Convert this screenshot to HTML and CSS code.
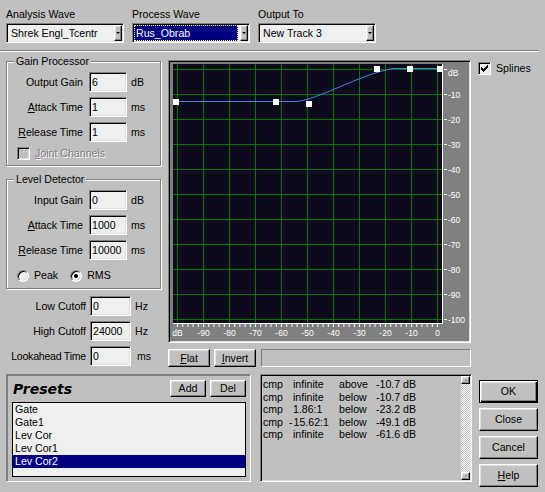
FILE: index.html
```html
<!DOCTYPE html>
<html lang="en">
<head>
    <meta charset="UTF-8">
    <meta name="viewport" content="width=device-width, initial-scale=1.0">
    <title>Dynamics Processing</title>
    <link rel="stylesheet" href="styles.css">
</head>
<body>
    <div class="dialog">
        <div class="wave-row">
            <div class="wave-field">
                <div class="wave-label">Analysis Wave</div>
                <div class="combo">
                    <span class="combo-text">Shrek Engl_Tcentr</span>
                    <span class="combo-btn"></span>
                </div>
            </div>
            <div class="wave-field">
                <div class="wave-label">Process Wave</div>
                <div class="combo">
                    <span class="combo-text selected">Rus_Obrab</span>
                    <span class="combo-btn"></span>
                </div>
            </div>
            <div class="wave-field">
                <div class="wave-label">Output To</div>
                <div class="combo">
                    <span class="combo-text">New Track 3</span>
                    <span class="combo-btn"></span>
                </div>
            </div>
        </div>

        <div class="separator"></div>

        <div class="main">
            <div class="left-col">
                <div class="group gain-group">
                    <div class="group-title">Gain Processor</div>
                    <div class="row">
                        <label class="lbl">Output Gain</label>
                        <input class="edit" type="text" value="6">
                        <span class="unit">dB</span>
                    </div>
                    <div class="row">
                        <label class="lbl"><u>A</u>ttack Time</label>
                        <input class="edit" type="text" value="1">
                        <span class="unit">ms</span>
                    </div>
                    <div class="row">
                        <label class="lbl"><u>R</u>elease Time</label>
                        <input class="edit" type="text" value="1">
                        <span class="unit">ms</span>
                    </div>
                    <div class="check-row disabled">
                        <span class="checkbox"></span>
                        <span class="check-label"><u>J</u>oint Channels</span>
                    </div>
                </div>

                <div class="group level-group">
                    <div class="group-title">Level Detector</div>
                    <div class="row">
                        <label class="lbl">Input Gain</label>
                        <input class="edit" type="text" value="0">
                        <span class="unit">dB</span>
                    </div>
                    <div class="row">
                        <label class="lbl"><u>A</u>ttack Time</label>
                        <input class="edit" type="text" value="1000">
                        <span class="unit">ms</span>
                    </div>
                    <div class="row">
                        <label class="lbl"><u>R</u>elease Time</label>
                        <input class="edit" type="text" value="10000">
                        <span class="unit">ms</span>
                    </div>
                    <div class="radio-row">
                        <span class="radio"></span>
                        <span class="radio-label peak">Peak</span>
                        <span class="radio checked"></span>
                        <span class="radio-label">RMS</span>
                    </div>
                </div>

                <div class="cutoffs">
                    <div class="row">
                        <label class="lbl wide">Low Cutoff</label>
                        <input class="edit wide" type="text" value="0">
                        <span class="unit">Hz</span>
                    </div>
                    <div class="row">
                        <label class="lbl wide">High Cutoff</label>
                        <input class="edit wide" type="text" value="24000">
                        <span class="unit">Hz</span>
                    </div>
                    <div class="row">
                        <label class="lbl wide narrow">Lookahead Time</label>
                        <input class="edit wide" type="text" value="0">
                        <span class="unit ms">ms</span>
                    </div>
                </div>
            </div>

            <div class="graph-col">
                <div class="graph">
                    <svg width="299" height="279" viewBox="0 0 299 279">
                        <rect x="3" y="2" width="269" height="259" fill="#0b0b1c"/>
                        <!-- grid, 10 dB per line -->
                        <path fill="#007800"
                              d="M7 2h1v259h-1z M33 2h1v259h-1z M59 2h1v259h-1z M85 2h1v259h-1z M111 2h1v259h-1z M137 2h1v259h-1z
                                 M163 2h1v259h-1z M189 2h1v259h-1z M215 2h1v259h-1z M241 2h1v259h-1z M267 2h1v259h-1z
                                 M3 7h269v1h-269z M3 32h269v1h-269z M3 57h269v1h-269z M3 82h269v1h-269z M3 107h269v1h-269z M3 132h269v1h-269z
                                 M3 157h269v1h-269z M3 182h269v1h-269z M3 207h269v1h-269z M3 232h269v1h-269z M3 257h269v1h-269z"/>
                        <!-- axes and ticks -->
                        <path fill="#fff"
                              d="M272 2h1v260h-1z M3 261h270v1h-270z
                                 M274 7h3v1h-3z M274 32h3v1h-3z M274 57h3v1h-3z M274 82h3v1h-3z M274 107h3v1h-3z M274 132h3v1h-3z
                                 M274 157h3v1h-3z M274 182h3v1h-3z M274 207h3v1h-3z M274 232h3v1h-3z M274 257h3v1h-3z"/>
                        <line x1="7" y1="263.5" x2="269" y2="263.5" stroke="#fff" stroke-width="3" stroke-dasharray="1 4.2"/>
                        <g class="axis-label">
                            <text x="278" y="14">dB</text>
                            <text x="278" y="35.5">-10</text>
                            <text x="278" y="60.5">-20</text>
                            <text x="278" y="85.5">-30</text>
                            <text x="278" y="110.5">-40</text>
                            <text x="278" y="135.5">-50</text>
                            <text x="278" y="160.5">-60</text>
                            <text x="278" y="185.5">-70</text>
                            <text x="278" y="210.5">-80</text>
                            <text x="278" y="235.5">-90</text>
                            <text x="278" y="260.5">-100</text>
                        </g>
                        <g class="axis-label bottom">
                            <text x="7.5" y="274">dB</text>
                            <text x="33.5" y="274">-90</text>
                            <text x="59.5" y="274">-80</text>
                            <text x="85.5" y="274">-70</text>
                            <text x="111.5" y="274">-60</text>
                            <text x="137.5" y="274">-50</text>
                            <text x="163.5" y="274">-40</text>
                            <text x="189.5" y="274">-30</text>
                            <text x="215.5" y="274">-20</text>
                            <text x="241.5" y="274">-10</text>
                            <text x="267.5" y="274">0</text>
                        </g>
                        <!-- transfer curve -->
                        <path d="M6 39.5H126C148 38 188 13 223 6.5H270" stroke="#4a80f0" stroke-width="1" fill="none"/>
                        <g fill="#fff">
                            <rect x="3" y="37" width="6" height="6"/>
                            <rect x="103" y="37" width="6" height="6"/>
                            <rect x="136" y="39" width="6" height="6"/>
                            <rect x="204" y="4" width="6" height="6"/>
                            <rect x="237" y="4" width="6" height="6"/>
                            <rect x="267" y="4" width="6" height="6"/>
                        </g>
                    </svg>
                </div>
                <div class="graph-tools">
                    <button class="btn tool-btn"><u>F</u>lat</button>
                    <button class="btn tool-btn"><u>I</u>nvert</button>
                    <div class="status-panel"></div>
                </div>
            </div>

            <div class="right-col">
                <div class="check-row">
                    <span class="checkbox checked">
                        <svg width="7" height="7" viewBox="0 0 7 7"><path d="M0 2H1V3H2V4H3V3H4V2H5V1H6V0H7V3H6V4H5V5H4V6H3V7H2V6H1V5H0Z" fill="#000"/></svg>
                    </span>
                    <span class="check-label">Splines</span>
                </div>
            </div>
        </div>

        <div class="bottom">
            <div class="presets">
                <div class="presets-head">
                    <span class="presets-title">Presets</span>
                    <button class="btn small-btn">Add</button>
                    <button class="btn small-btn">Del</button>
                </div>
                <div class="preset-list">
                    <div class="preset-item">Gate</div>
                    <div class="preset-item">Gate1</div>
                    <div class="preset-item">Lev Cor</div>
                    <div class="preset-item">Lev Cor1</div>
                    <div class="preset-item selected">Lev Cor2</div>
                </div>
            </div>

            <div class="info">
                <div class="log">
                    <div class="log-row"><span>cmp</span><span>infinite</span><span>above</span><span>-10.7 dB</span></div>
                    <div class="log-row"><span>cmp</span><span>infinite</span><span>below</span><span>-10.7 dB</span></div>
                    <div class="log-row"><span>cmp</span><span>1.86:1</span><span>below</span><span>-23.2 dB</span></div>
                    <div class="log-row"><span>cmp</span><span><span class="dash">-</span>15.62:1</span><span>below</span><span>-49.1 dB</span></div>
                    <div class="log-row"><span>cmp</span><span>infinite</span><span>below</span><span>-61.6 dB</span></div>
                </div>
                <div class="scrollbar">
                    <span class="scroll-btn up"></span>
                    <span class="scroll-track"></span>
                    <span class="scroll-btn down"></span>
                </div>
            </div>

            <div class="actions">
                <button class="btn action-btn default">OK</button>
                <button class="btn action-btn">Close</button>
                <button class="btn action-btn">Cancel</button>
                <button class="btn action-btn"><u>H</u>elp</button>
            </div>
        </div>
    </div>
</body>
</html>
```

FILE: styles.css
```css
body {
    margin: 0;
    width: 545px;
    height: 492px;
    overflow: hidden;
    background-color: #c0c0c0;
    font-family: "Liberation Sans", Arial, sans-serif;
    font-size: 10.6px;
    line-height: 13px;
    color: #000;
}

u {
    text-underline-offset: 1px;
}

/* shared 3d edges */
.combo,
.edit,
.checkbox,
.graph,
.info {
    box-sizing: border-box;
    border: 1px solid;
    border-color: #808080 #fff #fff #808080;
    box-shadow: inset 1px 1px #000, inset -1px -1px #dfdfdf;
}

.btn,
.combo-btn,
.scroll-btn {
    box-sizing: border-box;
    border: 1px solid;
    border-color: #fff #000 #000 #fff;
    box-shadow: inset -1px -1px #808080, inset 1px 1px #dfdfdf;
    background-color: #c0c0c0;
}

.btn {
    padding: 0;
    font: inherit;
    color: #000;
    text-align: center;
}

/* top row */
.wave-row {
    display: flex;
    gap: 8px;
    padding: 8px 0 0 6px;
}

.wave-label {
    margin-bottom: 2px;
}

.combo {
    display: flex;
    width: 118px;
    height: 20px;
    padding: 1px;
    background-color: #efefef;
}

.combo-text {
    flex: 1;
    padding-left: 3px;
    line-height: 16px;
    white-space: nowrap;
    overflow: hidden;
}

.combo-text.selected {
    margin-right: 2px;
    padding-left: 2px;
    background-color: #000080;
    color: #fff;
    outline: 1px dotted #ffff80;
    outline-offset: -1px;
}

.combo-btn {
    display: flex;
    align-items: center;
    justify-content: center;
    width: 8px;
}

.combo-btn::after {
    content: "";
    border-left: 2px solid transparent;
    border-right: 2px solid transparent;
    border-top: 2px solid #000;
}

.separator {
    width: 538px;
    margin-top: 7px;
    border-top: 1px solid #808080;
    border-bottom: 1px solid #fff;
}

/* middle */
.main {
    display: flex;
    padding-left: 6px;
}

.left-col {
    width: 155px;
    margin-top: 9px;
}

.group {
    border: 1px solid #808080;
    box-shadow: inset 1px 1px #fff, 1px 1px #fff;
}

.gain-group {
    padding-bottom: 5px;
}

.level-group {
    margin-top: 13px;
    padding-bottom: 6px;
}

.group-title {
    width: fit-content;
    margin: -7px 0 4px 7px;
    padding: 0 2px;
    background-color: #c0c0c0;
}

.row {
    display: flex;
    align-items: center;
    height: 20px;
}

.row + .row {
    margin-top: 5px;
}

.lbl {
    width: 76px;
    margin-right: 6px;
    text-align: right;
    white-space: nowrap;
}

.lbl.wide {
    width: 80px;
    margin-right: 4px;
}

.lbl.narrow {
    letter-spacing: -0.25px;
}

.edit {
    width: 38px;
    height: 20px;
    margin: 0;
    padding: 0 0 0 2px;
    background-color: #efefef;
    font: inherit;
    color: #000;
    outline: none;
}

.edit.wide {
    width: 41px;
}

.unit {
    margin-left: 4px;
}

.unit.ms {
    margin-left: 6px;
}

.check-row {
    display: flex;
    align-items: center;
    height: 13px;
}

.gain-group .check-row {
    margin-top: 5px;
    padding-left: 10px;
}

.checkbox {
    display: flex;
    align-items: center;
    justify-content: center;
    width: 13px;
    height: 13px;
    background-color: #efefef;
}

.check-label {
    margin-left: 5px;
}

.disabled .checkbox {
    background-color: #c0c0c0;
}

.disabled .check-label {
    color: #808080;
    text-shadow: 1px 1px #fff;
}

.radio-row {
    display: flex;
    align-items: center;
    height: 13px;
    margin-top: 9px;
    padding-left: 10px;
}

.radio {
    display: flex;
    align-items: center;
    justify-content: center;
    box-sizing: border-box;
    width: 12px;
    height: 12px;
    border: 1px solid;
    border-color: #808080 #fff #fff #808080;
    border-radius: 50%;
    box-shadow: inset 1px 1px #000, inset -1px -1px #dfdfdf;
    background-color: #efefef;
}

.radio.checked::after {
    content: "";
    width: 4px;
    height: 4px;
    border-radius: 50%;
    background-color: #000;
}

.radio-label {
    margin-left: 5px;
}

.radio-label.peak {
    margin-right: 12px;
}

.cutoffs {
    margin-top: 7px;
}

/* graph */
.graph-col {
    width: 303px;
    margin: 8px 0 0 7px;
}

.graph {
    width: 303px;
    height: 283px;
    padding: 1px;
    background-color: #808080;
}

.graph svg {
    display: block;
}

.axis-label {
    fill: #fff;
    font-family: "Liberation Sans", Arial, sans-serif;
    font-size: 8.5px;
}

.axis-label.bottom {
    text-anchor: middle;
}

.graph-tools {
    display: flex;
    gap: 4px;
    margin-top: 6px;
}

.tool-btn {
    width: 42px;
    height: 18px;
}

.status-panel {
    flex: 1;
    height: 18px;
    margin-left: 1px;
    box-sizing: border-box;
    border: 1px solid;
    border-color: #808080 #fff #fff #808080;
}

.right-col {
    margin: 10px 0 0 7px;
}

/* bottom */
.bottom {
    display: flex;
    margin-top: 7px;
    padding-left: 6px;
}

.presets {
    box-sizing: border-box;
    width: 245px;
    height: 108px;
    padding: 5px 4px 0 5px;
    border: 1px solid;
    border-color: #808080 #fff #fff #808080;
    box-shadow: inset 1px 1px #808080;
}

.presets-head {
    display: flex;
    align-items: flex-start;
    height: 18px;
    margin-bottom: 4px;
}

.presets-title {
    flex: 1;
    margin-left: 1px;
    font-family: "DejaVu Sans", sans-serif;
    font-size: 14px;
    font-weight: bold;
    font-style: italic;
    line-height: 18px;
}

.small-btn {
    width: 36px;
    height: 17px;
    margin-left: 4px;
}

.preset-list {
    box-sizing: border-box;
    height: 75px;
    border: 1px solid #000;
    background-color: #efefef;
}

.preset-item {
    padding-left: 2px;
}

.preset-item.selected {
    background-color: #000080;
    color: #fff;
}

.info {
    display: flex;
    width: 212px;
    height: 108px;
    margin-left: 9px;
    padding: 1px;
}

.log {
    flex: 1;
    padding: 2px 0 0 1px;
}

.log-row {
    display: grid;
    grid-template-columns: 30px 46px 37px auto;
    line-height: 12.5px;
    white-space: nowrap;
}

.dash {
    margin-left: -4px;
    margin-right: 1px;
}

.scrollbar {
    display: flex;
    flex-direction: column;
    width: 9px;
    background: repeating-conic-gradient(#c0c0c0 0 25%, #fff 0 50%) 0 0 / 2px 2px;
}

.scroll-track {
    flex: 1;
}

.scroll-btn {
    display: flex;
    align-items: center;
    justify-content: center;
    height: 8px;
}

.scroll-btn::after {
    content: "";
    border-left: 1.5px solid transparent;
    border-right: 1.5px solid transparent;
}

.scroll-btn.up::after {
    border-bottom: 2px solid #808080;
}

.scroll-btn.down::after {
    border-top: 2px solid #808080;
}

.actions {
    display: flex;
    flex-direction: column;
    gap: 5px;
    margin: 6px 0 0 7px;
}

.action-btn {
    width: 59px;
    height: 23px;
}

.action-btn.default {
    border-color: #000;
    box-shadow: inset 1px 1px #fff, inset -1px -1px #000, inset -2px -2px #808080, inset 2px 2px #dfdfdf;
}
```
